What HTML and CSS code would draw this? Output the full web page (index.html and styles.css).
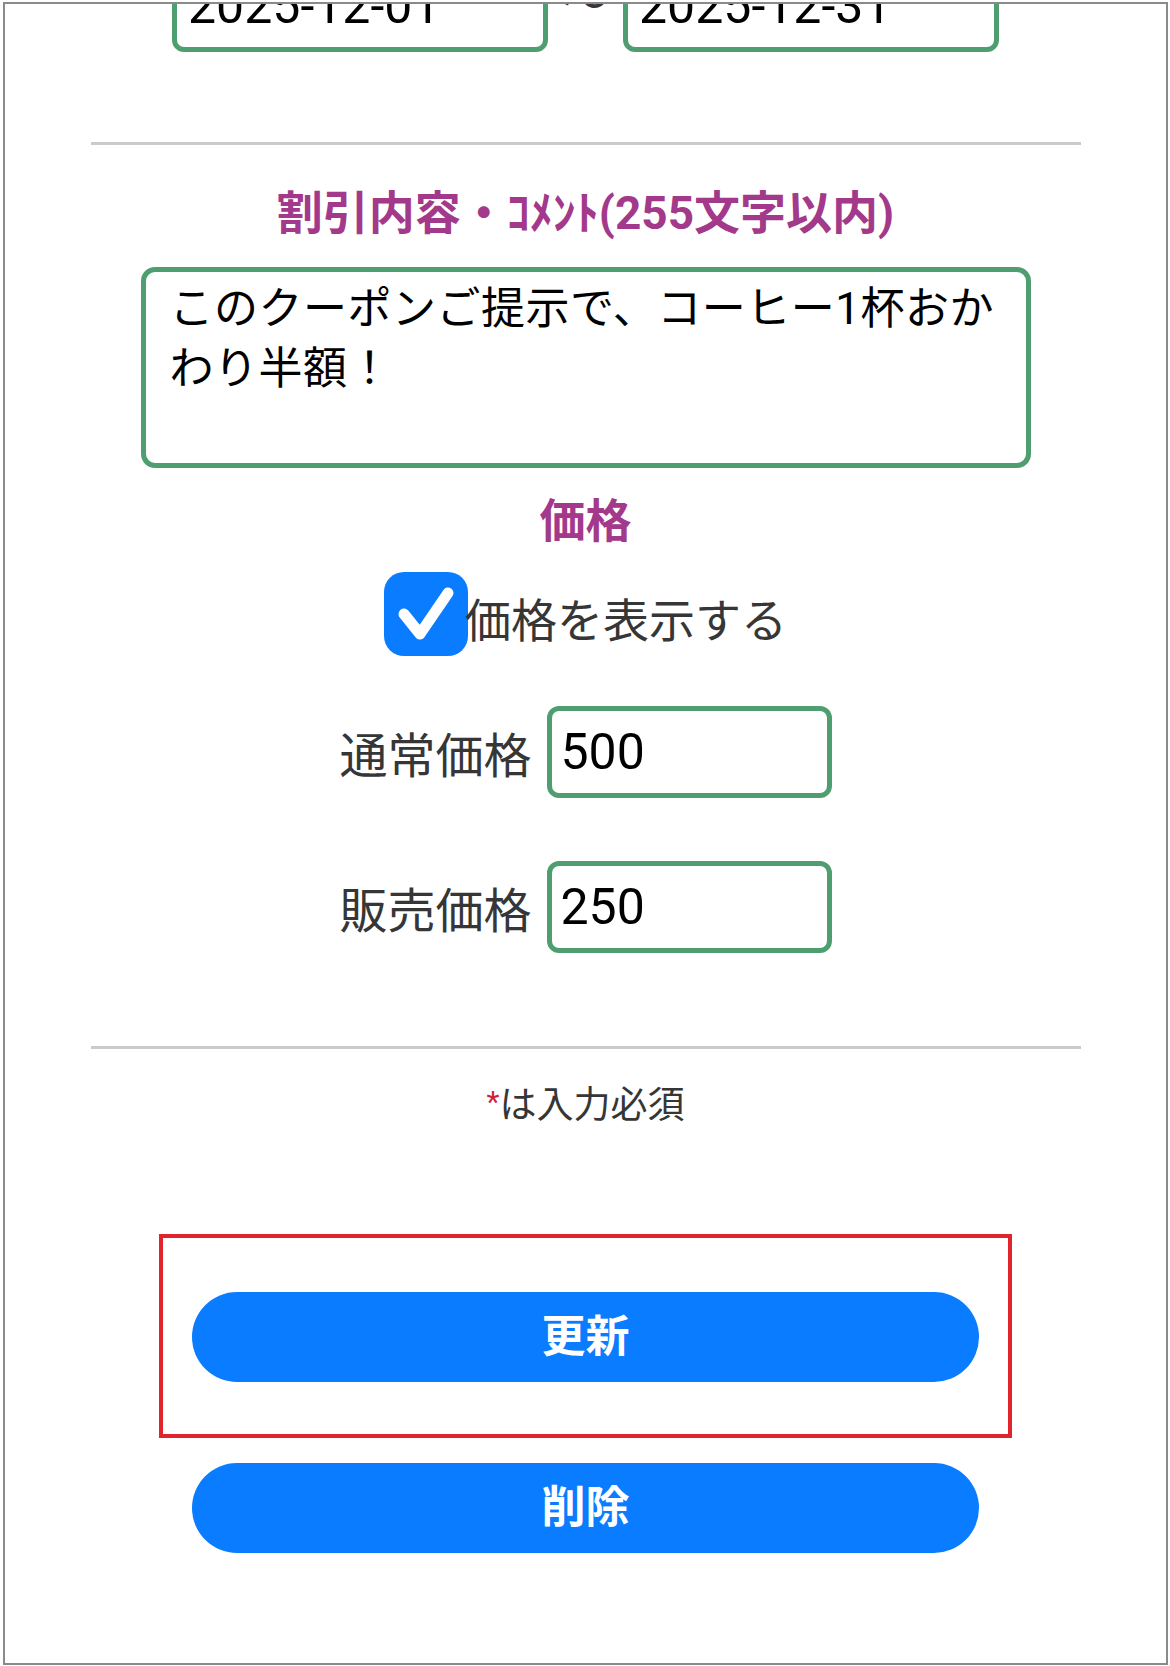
FILE: index.html
```html
<!DOCTYPE html>
<html lang="ja">
<head>
<meta charset="utf-8" />
<meta name="viewport" content="width=device-width,initial-scale=1" />
<title>クーポン編集</title>
<link rel="stylesheet" href="styles.css">
</head>
<body>

<div class="frame">
  <form class="coupon" action="#" onsubmit="return false">

    <!-- ===== 期間 (scrolled past the top) ===== -->
    <div class="dates">
      <input class="field date" type="text" value="2025-12-01">
      <span class="tilde">〜</span>
      <input class="field date" type="text" value="2025-12-31">
    </div>

    <hr class="rule first">

    <!-- ===== コメント ===== -->
    <h2 class="sec sec-comment">割引内容・ｺﾒﾝﾄ(255文字以内)</h2>
    <textarea class="comment" rows="3">このクーポンご提示で、コーヒー1杯おかわり半額！</textarea>

    <!-- ===== 価格 ===== -->
    <h2 class="sec sec-price">価格</h2>
    <label class="check">
      <input type="checkbox" checked>
      <span class="box">
        <svg viewBox="0 0 84 84" width="84" height="84" aria-hidden="true">
          <polyline points="20,42 36,62 64,21" fill="none" stroke="#fff" stroke-width="11" stroke-linecap="round" stroke-linejoin="round"/>
        </svg>
      </span>
      <span class="check-text">価格を表示する</span>
    </label>

    <div class="price-row first-row">
      <span class="price-label">通常価格</span>
      <input class="field price" type="text" inputmode="numeric" value="500">
    </div>
    <div class="price-row second-row">
      <span class="price-label">販売価格</span>
      <input class="field price" type="text" inputmode="numeric" value="250">
    </div>

    <hr class="rule second">

    <p class="note"><span class="req">*</span>は入力必須</p>

    <!-- ===== actions ===== -->
    <div class="focus-box">
      <button class="btn" type="submit">更新</button>
    </div>
    <button class="btn btn-delete" type="button">削除</button>

  </form>
</div>

</body>
</html>
```

FILE: styles.css
```css
/* ===== Vars & base ===== */
:root{
  --font: Roboto, "Noto Sans CJK JP", sans-serif;
  --green:#4f9e70;
  --purple:#a3398a;
  --blue:#0a7cff;
  --text:#363636;
  --rule:#cbcbcb;
}
*{box-sizing:border-box}
html,body{margin:0;background:#fff;color:var(--text);font-family:var(--font)}

/* outer device frame */
.frame{
  margin:2px 2px 0 3px;
  height:1663px;
  border:2px solid #8a8a8a;
  overflow:hidden;
  background:#fff;
}

.coupon{display:flex; flex-direction:column; align-items:center}

/* ===== shared field look ===== */
.field{
  font-family:var(--font);
  font-size:50px;
  color:#000;
  background:#fff;
  border:5px solid var(--green);
  border-radius:12px;
  outline:none;
  margin:0;
}

/* ===== dates (cut off by the scroll) ===== */
.dates{display:flex; align-items:center; margin-top:-44px; height:92px}
.date{width:376px; height:92px; padding:0 11px}
.tilde{width:75px; text-align:center; font-size:46px; color:var(--text); margin-top:-14px}

/* ===== rules ===== */
.rule{width:990px; height:3px; border:0; background:var(--rule); margin:0}
.rule.first{margin-top:90px}
.rule.second{margin-top:93px}

/* ===== section titles ===== */
.sec{margin:0; font-size:46px; line-height:56px; font-weight:700; color:var(--purple); text-align:center}
.sec-comment{margin-top:40px}
.sec-price{margin-top:25px}

/* ===== comment ===== */
.comment{
  display:block;
  width:890px; height:201px;
  margin-top:26px;
  padding:7px 24px;
  font-family:var(--font);
  font-size:44px; line-height:60px;
  letter-spacing:.5px;
  color:#000;
  border:5px solid var(--green);
  border-radius:14px;
  resize:none; outline:none;
  overflow:hidden;
}

/* ===== checkbox ===== */
.check{display:flex; align-items:center; margin-top:23px; height:84px; cursor:pointer}
.check input{display:none}
.check .box{
  width:84px; height:84px;
  border-radius:20px;
  background:var(--blue);
  display:flex; align-items:center; justify-content:center;
}
.check .box svg{display:block}
.check-text{font-size:46px; color:var(--text); padding-top:6px; margin-left:-3px}

/* ===== price rows ===== */
.price-row{display:flex; align-items:center; gap:15px; height:92px}
.first-row{margin-top:50px}
.second-row{margin-top:63px}
.price-label{font-size:48px; color:var(--text)}
.price{width:285px; height:92px; padding:0 9px}

/* ===== note ===== */
.note{margin:33px 0 0; font-size:37px; line-height:48px; color:var(--text)}
.req{color:#d42035; font-size:30px; vertical-align:top; line-height:40px}

/* ===== buttons ===== */
.focus-box{
  width:853px;
  margin-top:104px;
  padding:54px 0 52px;
  border:4px solid #e1232a;
  display:flex; justify-content:center;
}
.btn{
  display:block;
  width:787px; height:90px;
  border:0; border-radius:45px;
  background:var(--blue);
  color:#fff;
  font-family:var(--font);
  font-size:44px; font-weight:700;
  line-height:90px;
  padding:0;
  cursor:pointer;
}
.btn-delete{margin-top:25px}
```
